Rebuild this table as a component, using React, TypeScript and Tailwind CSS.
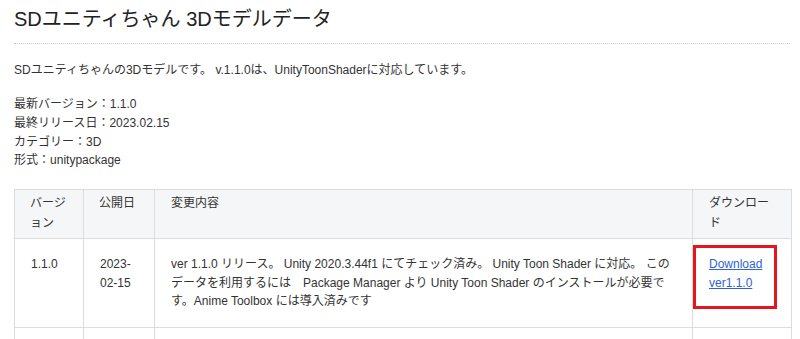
const Colon = () => <span className="font-['Noto_Sans_CJK_TC',sans-serif]">：</span>;

export default function App() {
  const font = { fontFamily: '"Liberation Sans", "Noto Sans CJK JP", sans-serif' };
  return (
    <div className="w-[800px] h-[339px] overflow-hidden bg-white text-[#333]" style={font}>
      <div className="px-[14px] pt-[4px]">
        <h1 className="text-[20px] leading-[30px] text-[#222] pb-[9px] border-b border-dotted border-[#c8c8c8] w-[776px]">
          SDユニティちゃん 3Dモデルデータ
        </h1>
        <p className="mt-[17px] text-[12px] leading-[19px]">
          SDユニティちゃんの3Dモデルです。 v.1.1.0は、UnityToonShaderに対応しています。
        </p>
        <div className="mt-[13px] text-[12px] leading-[19px] flex flex-col">
          <div className="h-[18.8px]">最新バージョン<Colon />1.1.0</div>
          <div className="h-[18.8px]">最終リリース日<Colon />2023.02.15</div>
          <div className="h-[18.8px]">カテゴリー<Colon />3D</div>
          <div className="h-[18.8px]">形式<Colon />unitypackage</div>
        </div>
        <table className="mt-[21px] w-[777px] table-fixed border-collapse text-[12px]">
          <colgroup>
            <col className="w-[69px]" />
            <col className="w-[71px]" />
            <col className="w-[538px]" />
            <col className="w-[99px]" />
          </colgroup>
          <thead>
            <tr className="bg-[#f5f6f8] h-[49px]">
              <th className="border border-[#dcdcdc] px-[15px] pt-[3px] pb-[5px] font-normal text-left align-top leading-[20px]">バージョン</th>
              <th className="border border-[#dcdcdc] px-[15px] pt-[3px] pb-[5px] font-normal text-left align-top leading-[20px]">公開日</th>
              <th className="border border-[#dcdcdc] px-[16px] pt-[3px] pb-[5px] font-normal text-left align-top leading-[20px]">変更内容</th>
              <th className="border border-[#dcdcdc] px-[16px] pt-[3px] pb-[5px] font-normal text-left align-top leading-[20px]">ダウンロード</th>
            </tr>
          </thead>
          <tbody>
            <tr className="h-[88px]">
              <td className="border border-[#dcdcdc] px-[16px] py-[16px] align-top leading-[18.5px]">1.1.0</td>
              <td className="border border-[#dcdcdc] px-[16px] py-[16px] align-top leading-[18.5px]">2023-02-15</td>
              <td className="border border-[#dcdcdc] px-[16px] py-[16px] align-top leading-[18.5px]">
                ver 1.1.0 リリース。 Unity 2020.3.44f1 にてチェック済み。 Unity Toon Shader に対応。 このデータを利用するには　Package Manager より Unity Toon Shader のインストールが必要です。Anime Toolbox には導入済みです
              </td>
              <td className="relative border border-[#dcdcdc] px-[16px] py-[16px] align-top leading-[18.5px]">
                <a href="#" className="text-[#2f63d6] underline">Download ver1.1.0</a>
                <span className="absolute left-[0px] top-[6px] w-[84px] h-[64px] border-[3px] border-[#e5141e] pointer-events-none" />
              </td>
            </tr>
            <tr className="h-[40px]">
              <td className="border border-[#dcdcdc]"></td>
              <td className="border border-[#dcdcdc]"></td>
              <td className="border border-[#dcdcdc]"></td>
              <td className="border border-[#dcdcdc]"></td>
            </tr>
          </tbody>
        </table>
      </div>
    </div>
  );
}
